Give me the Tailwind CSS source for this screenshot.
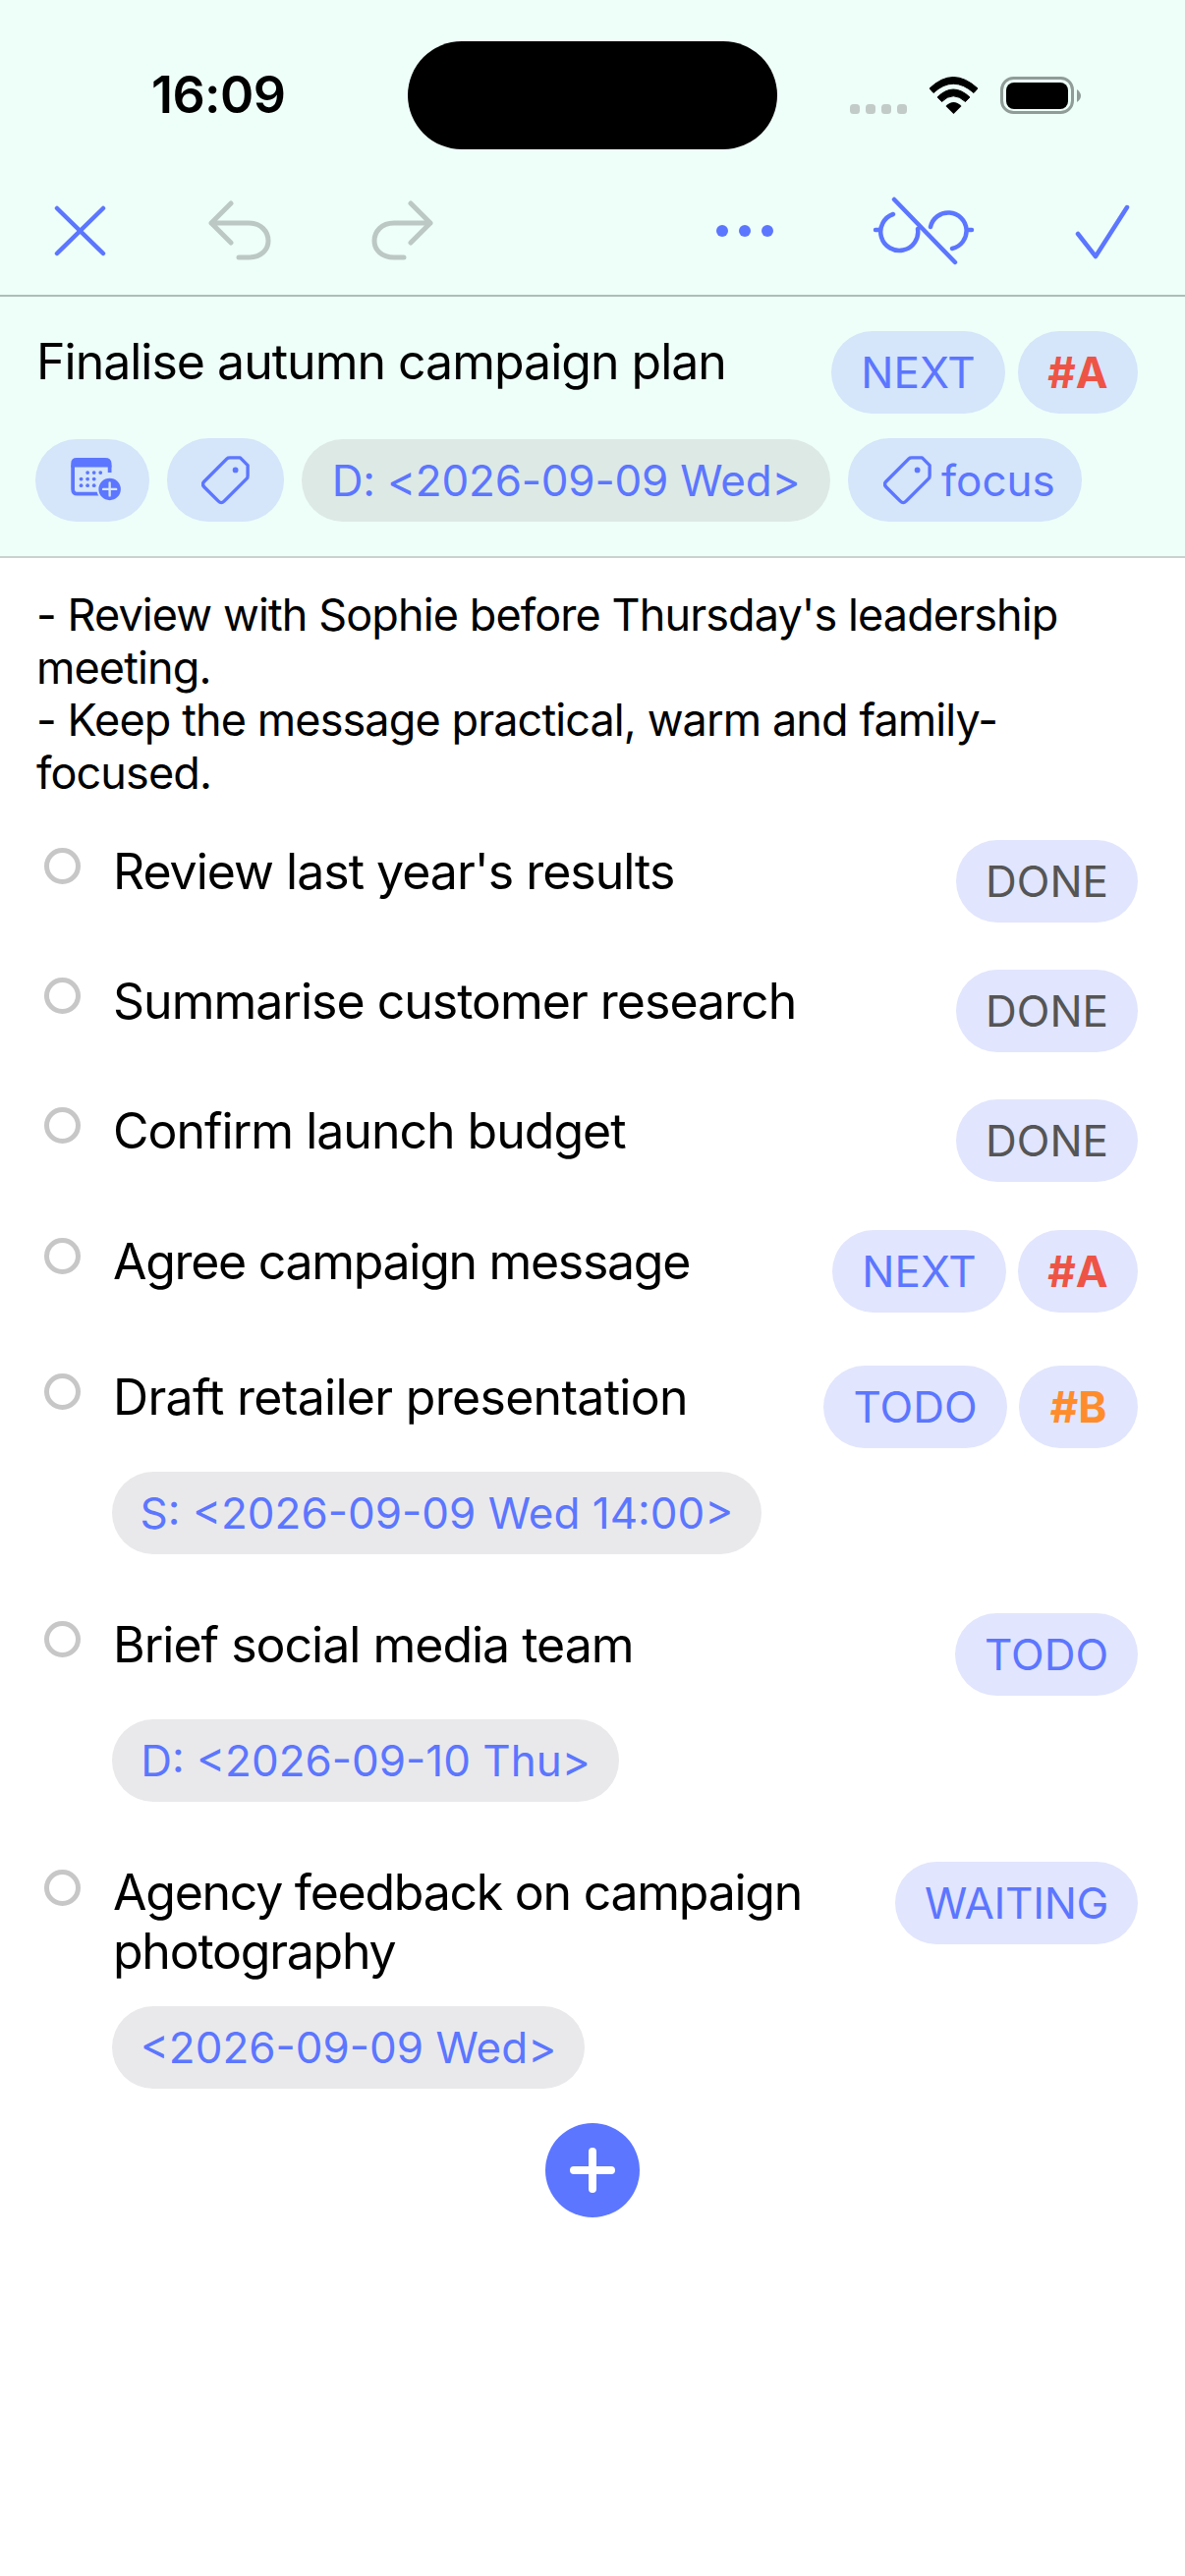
<!DOCTYPE html>
<html lang="en">
<head>
<meta charset="utf-8">
<script src="https://cdn.jsdelivr.net/npm/@tailwindcss/browser@4"></script>
<title>Task</title>
</head>
<body class="w-[1206px] h-[2622px] bg-white overflow-hidden font-['Inter',sans-serif] text-black">
<div class="bg-[#eefff9]">
  <div class="flex h-[190px] pt-[42px]">
    <div class="w-[415px] h-[110px] flex items-center justify-start pl-[154px] text-[52px] font-semibold tracking-[-0.6px]">16:09</div>
    <div class="w-[376px] h-[110px] rounded-[55px] bg-black"></div>
    <svg class="ml-[60px]" width="260" height="110" viewBox="851 42 260 110">
      <rect x="865" y="106" width="10" height="10" rx="3.5" fill="#c2cbc7"/>
      <rect x="881" y="106" width="10" height="10" rx="3.5" fill="#c2cbc7"/>
      <rect x="897" y="106" width="10" height="10" rx="3.5" fill="#c2cbc7"/>
      <rect x="913" y="106" width="10" height="10" rx="3.5" fill="#c2cbc7"/>
      <path d="M946 90 Q970 67 995 90 L991 94.5 Q970 76 950 94.5Z" fill="#000" stroke="#000" stroke-width="1"/>
      <path d="M954 99 Q970 83 987 99 L982.500 103.500 Q970 92 958.500 103.500Z" fill="#000" stroke="#000" stroke-width="1"/>
      <path d="M962.500 108 Q970.500 100 978.500 108 L970.500 116Z" fill="#000"/>
      <rect x="1019.500" y="79.500" width="72" height="35" rx="12" fill="none" stroke="#8f9c97" stroke-width="3"/>
      <rect x="1024" y="84" width="63" height="27" rx="8" fill="#000"/>
      <path d="M1096 91 Q1100 94 1100 97.500 Q1100 101 1096 104Z" fill="#8f9c97"/>
    </svg>
  </div>
  <div class="flex items-start h-[112px] border-b-2 border-[#aebcb7]">
    <svg class="ml-[50px] mt-[13px] shrink-0" width="62" height="62" viewBox="50 203 62 62" fill="none" stroke="#5c76ff" stroke-width="4.500" stroke-linecap="round"><path d="M58 212 L105 258 M105 212 L58 258"/></svg>
    <svg class="ml-[96px] mt-[9px] shrink-0" width="70" height="70" viewBox="208 199 70 70" fill="none" stroke="#bcc8c4" stroke-width="5" stroke-linecap="round" stroke-linejoin="round"><path d="M235 207 L215 227 L235 247 M215 227 H253 C266 227 273 236 273 245 C273 254 266 262 253 262 H243"/></svg>
    <svg class="ml-[98px] mt-[9px] shrink-0" width="70" height="70" viewBox="376 199 70 70" fill="none" stroke="#bcc8c4" stroke-width="5" stroke-linecap="round" stroke-linejoin="round"><path d="M418 207 L438 227 L418 247 M438 227 H401 C388 227 381 236 381 245 C381 254 388 262 401 262 H411"/></svg>
    <div class="ml-[283px] mt-[39px] flex gap-[11px] shrink-0">
      <div class="w-[12px] h-[12px] rounded-full bg-[#5c76ff]"></div>
      <div class="w-[12px] h-[12px] rounded-full bg-[#5c76ff]"></div>
      <div class="w-[12px] h-[12px] rounded-full bg-[#5c76ff]"></div>
    </div>
    <svg class="ml-[98px] mt-[7px] shrink-0" width="110" height="76" viewBox="885 197 110 76" fill="none" stroke="#5c76ff" stroke-width="4.500" stroke-linecap="round"><path d="M909 218 A19 19 0 1 0 934 233 M947 231 A18.500 18.500 0 1 1 969 253 M891 234 H896 M984 234 H989 M910 203 L972 267"/></svg>
    <svg class="ml-[95px] mt-[14px] shrink-0" width="70" height="62" viewBox="1090 204 70 62" fill="none" stroke="#5c76ff" stroke-width="4.500" stroke-linecap="round" stroke-linejoin="round"><path d="M1097 238 L1115 261 L1147 211"/></svg>
  </div>
  <div class="h-[266px] border-b-2 border-[#c9d2ce] relative">
    <div class="flex items-start justify-between pl-[37px] pr-[48px] pt-[35px]">
      <div class="text-[50px] leading-[64px] -mt-[1px] tracking-[-1px]">Finalise autumn campaign plan</div>
      <div class="flex gap-[13px]">
        <div class="h-[84px] w-[177px] rounded-[42px] bg-[#d5e5fa] flex items-center justify-center text-[#5c76ff] text-[44px]">NEXT</div>
        <div class="h-[84px] w-[122px] rounded-[42px] bg-[#d5e5fa] flex items-center justify-center text-[#ee5446] text-[44px] font-bold">#A</div>
      </div>
    </div>
    <div class="flex items-center mt-[25px] pl-[36px] gap-[18px]">
      <div class="h-[84px] w-[116px] rounded-[42px] bg-[#d5e5fa] flex items-center justify-center">
        <svg class="ml-[9px]" width="53" height="45" viewBox="0 0 56 48">
          <path d="M6 0 H37 Q44 0 44 6 V10 H0 V6 Q0 0 6 0Z" fill="#5c76ff"/>
          <path d="M2 8 V34 Q2 39 7 39 H32 M42 8 V16" fill="none" stroke="#5c76ff" stroke-width="4"/>
          <g fill="#5c76ff"><circle cx="18" cy="16" r="2"/><circle cx="25" cy="16" r="2"/><circle cx="32" cy="16" r="2"/><circle cx="11" cy="23" r="2"/><circle cx="18" cy="23" r="2"/><circle cx="25" cy="23" r="2"/><circle cx="11" cy="30" r="2"/><circle cx="18" cy="30" r="2"/><circle cx="25" cy="30" r="2"/></g>
          <circle cx="42" cy="34" r="13" fill="#5c76ff" stroke="#d5e5fa" stroke-width="2"/>
          <path d="M42 27 V41 M35 34 H49" stroke="#d5e5fa" stroke-width="2.500" stroke-linecap="round"/>
        </svg>
      </div>
      <div class="h-[85px] w-[119px] rounded-[42px] bg-[#d5e5fa] flex items-center justify-center">
        <svg width="50" height="50" viewBox="0 0 52 52" fill="none" stroke="#5c76ff" stroke-width="3.500" stroke-linejoin="round"><path d="M3 27 L27 3 Q28 2 30 2 H41 L49 10 V21 Q49 23 48 24 L24 48 Q21 51 18 48 L3 33 Q0 30 3 27Z"/><circle cx="36" cy="15" r="3" fill="#5c76ff" stroke="none"/></svg>
      </div>
      <div class="h-[84px] w-[538px] rounded-[42px] bg-[#dde9e5] flex items-center justify-center text-[#5c76ff] text-[44px] tracking-[-0.2px]">D: &lt;2026-09-09 Wed&gt;</div>
      <div class="h-[85px] w-[238px] rounded-[42px] bg-[#d5e5fa] flex items-center pl-[36px] gap-[9px] text-[#5c76ff] text-[44px]">
        <svg width="50" height="50" viewBox="0 0 52 52" fill="none" stroke="#5c76ff" stroke-width="3.500" stroke-linejoin="round"><path d="M3 27 L27 3 Q28 2 30 2 H41 L49 10 V21 Q49 23 48 24 L24 48 Q21 51 18 48 L3 33 Q0 30 3 27Z"/><circle cx="36" cy="15" r="3" fill="#5c76ff" stroke="none"/></svg>
        <span>focus</span>
      </div>
    </div>
  </div>
</div>
<div class="pl-[37px] pt-[31px] text-[45px] leading-[53.500px] tracking-[-0.9px] whitespace-nowrap">
  <p>- Review with Sophie before Thursday's leadership</p>
  <p>meeting.</p>
  <p>- Keep the message practical, warm and family-</p>
  <p>focused.</p>
</div>
<div class="mt-[42px] pl-[45px] pr-[48px] text-[50px] leading-[60px] tracking-[-1px]">
  <div class="flex items-start h-[84px]">
    <div class="w-[37px] h-[37px] mt-[8px] rounded-full border-[5px] border-[#c7c7c7] shrink-0"></div>
    <div class="ml-[33px] mt-[2px] flex-1">Review last year's results</div>
    <div class="h-[84px] w-[185px] rounded-[42px] bg-[#e1e5fd] flex items-center justify-center text-[#555555] text-[44px] tracking-normal">DONE</div>
  </div>
  <div class="flex items-start h-[84px] mt-[48px]">
    <div class="w-[37px] h-[37px] mt-[8px] rounded-full border-[5px] border-[#c7c7c7] shrink-0"></div>
    <div class="ml-[33px] mt-[2px] flex-1">Summarise customer research</div>
    <div class="h-[84px] w-[185px] rounded-[42px] bg-[#e1e5fd] flex items-center justify-center text-[#555555] text-[44px] tracking-normal">DONE</div>
  </div>
  <div class="flex items-start h-[84px] mt-[48px]">
    <div class="w-[37px] h-[37px] mt-[8px] rounded-full border-[5px] border-[#c7c7c7] shrink-0"></div>
    <div class="ml-[33px] mt-[2px] flex-1">Confirm launch budget</div>
    <div class="h-[84px] w-[185px] rounded-[42px] bg-[#e1e5fd] flex items-center justify-center text-[#555555] text-[44px] tracking-normal">DONE</div>
  </div>
  <div class="flex items-start h-[84px] mt-[49px]">
    <div class="w-[37px] h-[37px] mt-[8px] rounded-full border-[5px] border-[#c7c7c7] shrink-0"></div>
    <div class="ml-[33px] mt-[2px] flex-1 tracking-[-1.3px]">Agree campaign message</div>
    <div class="flex gap-[12px] tracking-normal">
      <div class="h-[84px] w-[177px] rounded-[42px] bg-[#e1e5fd] flex items-center justify-center text-[#5c76ff] text-[44px]">NEXT</div>
      <div class="h-[84px] w-[122px] rounded-[42px] bg-[#e1e5fd] flex items-center justify-center text-[#ee5446] text-[44px] font-bold">#A</div>
    </div>
  </div>
  <div class="flex items-start h-[84px] mt-[54px]">
    <div class="w-[37px] h-[37px] mt-[8px] rounded-full border-[5px] border-[#c7c7c7] shrink-0"></div>
    <div class="ml-[33px] mt-[2px] flex-1 tracking-[-0.7px]">Draft retailer presentation</div>
    <div class="flex gap-[12px] tracking-normal">
      <div class="h-[84px] w-[187px] rounded-[42px] bg-[#e1e5fd] flex items-center justify-center text-[#5c76ff] text-[44px]">TODO</div>
      <div class="h-[84px] w-[121px] rounded-[42px] bg-[#e1e5fd] flex items-center justify-center text-[#ff8c2b] text-[44px] font-bold">#B</div>
    </div>
  </div>
  <div class="ml-[69px] mt-[24px] h-[84px] w-[661px] rounded-[42px] bg-[#e9e9eb] flex items-center justify-center text-[#5c76ff] text-[44px] tracking-normal">S: &lt;2026-09-09 Wed 14:00&gt;</div>
  <div class="flex items-start h-[84px] mt-[60px]">
    <div class="w-[37px] h-[37px] mt-[8px] rounded-full border-[5px] border-[#c7c7c7] shrink-0"></div>
    <div class="ml-[33px] mt-[2px] flex-1">Brief social media team</div>
    <div class="h-[84px] w-[186px] rounded-[42px] bg-[#e1e5fd] flex items-center justify-center text-[#5c76ff] text-[44px] tracking-normal">TODO</div>
  </div>
  <div class="ml-[69px] mt-[24px] h-[84px] w-[516px] rounded-[42px] bg-[#e9e9eb] flex items-center justify-center text-[#5c76ff] text-[44px] tracking-normal">D: &lt;2026-09-10 Thu&gt;</div>
  <div class="flex items-start mt-[61px]">
    <div class="w-[37px] h-[37px] mt-[8px] rounded-full border-[5px] border-[#c7c7c7] shrink-0"></div>
    <div class="ml-[33px] mt-[1px] flex-1 tracking-[-1.25px]">Agency feedback on campaign<br>photography</div>
    <div class="h-[84px] w-[247px] rounded-[42px] bg-[#e1e5fd] flex items-center justify-center text-[#5c76ff] text-[44px] tracking-[-0.3px]">WAITING</div>
  </div>
  <div class="ml-[69px] mt-[26px] h-[84px] w-[481px] rounded-[42px] bg-[#e9e9eb] flex items-center justify-center text-[#5c76ff] text-[44px] tracking-normal">&lt;2026-09-09 Wed&gt;</div>
</div>
<div class="mt-[35px] flex justify-center">
  <div class="w-[96px] h-[96px] rounded-full bg-[#5c76ff] flex items-center justify-center">
    <svg width="48" height="48" viewBox="0 0 48 48" stroke="#fff" stroke-width="8" stroke-linecap="round"><path d="M24 5 V43 M5 24 H43"/></svg>
  </div>
</div>
</body>
</html>
